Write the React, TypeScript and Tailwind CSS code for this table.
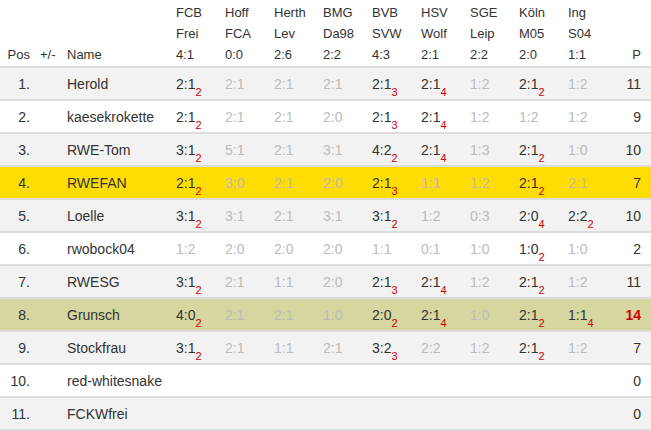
import React from "react";

type Cell = [string, number | null];

const cols: [string, string, string][] = [
  ["FCB", "Frei", "4:1"],
  ["Hoff", "FCA", "0:0"],
  ["Herth", "Lev", "2:6"],
  ["BMG", "Da98", "2:2"],
  ["BVB", "SVW", "4:3"],
  ["HSV", "Wolf", "2:1"],
  ["SGE", "Leip", "2:2"],
  ["Köln", "M05", "2:0"],
  ["Ing", "S04", "1:1"],
];

const c = (s: string, n: number | null = null): Cell => [s, n];

type Row = { pos: string; name: string; cells: Cell[]; p: number; bg: string; hi?: boolean };

const rows: Row[] = [
  { pos: "1.", name: "Herold", p: 11, bg: "bg-[#f2f2f2]", cells: [c("2:1", 2), c("2:1"), c("2:1"), c("2:1"), c("2:1", 3), c("2:1", 4), c("1:2"), c("2:1", 2), c("1:2")] },
  { pos: "2.", name: "kaesekrokette", p: 9, bg: "bg-white", cells: [c("2:1", 2), c("2:1"), c("2:1"), c("2:0"), c("2:1", 3), c("2:1", 4), c("1:2"), c("1:2"), c("1:2")] },
  { pos: "3.", name: "RWE-Tom", p: 10, bg: "bg-[#f2f2f2]", cells: [c("3:1", 2), c("5:1"), c("2:1"), c("3:1"), c("4:2", 2), c("2:1", 4), c("1:3"), c("2:1", 2), c("1:0")] },
  { pos: "4.", name: "RWEFAN", p: 7, bg: "bg-[#ffdd00]", cells: [c("2:1", 2), c("3:0"), c("2:1"), c("2:0"), c("2:1", 3), c("1:1"), c("1:2"), c("2:1", 2), c("2:1")] },
  { pos: "5.", name: "Loelle", p: 10, bg: "bg-[#f2f2f2]", cells: [c("3:1", 2), c("3:1"), c("2:1"), c("3:1"), c("3:1", 2), c("1:2"), c("0:3"), c("2:0", 4), c("2:2", 2)] },
  { pos: "6.", name: "rwobock04", p: 2, bg: "bg-white", cells: [c("1:2"), c("2:0"), c("2:0"), c("2:0"), c("1:1"), c("0:1"), c("1:0"), c("1:0", 2), c("1:0")] },
  { pos: "7.", name: "RWESG", p: 11, bg: "bg-[#f2f2f2]", cells: [c("3:1", 2), c("2:1"), c("1:1"), c("2:0"), c("2:1", 3), c("2:1", 4), c("1:2"), c("2:1", 2), c("1:2")] },
  { pos: "8.", name: "Grunsch", p: 14, hi: true, bg: "bg-[#d6d6a0]", cells: [c("4:0", 2), c("2:1"), c("2:1"), c("1:0"), c("2:0", 2), c("2:1", 4), c("1:0"), c("2:1", 2), c("1:1", 4)] },
  { pos: "9.", name: "Stockfrau", p: 7, bg: "bg-[#f2f2f2]", cells: [c("3:1", 2), c("2:1"), c("1:1"), c("2:1"), c("3:2", 3), c("2:2"), c("1:2"), c("2:1", 2), c("1:2")] },
  { pos: "10.", name: "red-whitesnake", p: 0, bg: "bg-white", cells: [] },
  { pos: "11.", name: "FCKWfrei", p: 0, bg: "bg-[#f2f2f2]", cells: [] },
];

export default function App() {
  return (
    <div className="w-[651px] h-[431px] bg-white overflow-hidden text-[#333]" style={{ fontFamily: '"Liberation Sans", Arial, sans-serif' }}>
      <table className="table-fixed border-separate border-spacing-0 w-[651px]">
        <colgroup>
          <col className="w-[36px]" />
          <col className="w-[26px]" />
          <col className="w-[109px]" />
          {cols.map((_, i) => (
            <col key={i} className="w-[49px]" />
          ))}
          <col className="w-[39px]" />
        </colgroup>
        <thead>
          <tr className="h-[66px] text-[13px] leading-[21.33px]">
            <th className="h-[66px] p-0 align-bottom text-right pr-[6px] pb-[0.5px] font-normal">Pos</th>
            <th className="h-[66px] p-0 align-bottom text-left pl-[4px] pb-[0.5px] font-normal">+/-</th>
            <th className="h-[66px] p-0 align-bottom text-left pl-[5px] pb-[0.5px] font-normal">Name</th>
            {cols.map((h, i) => (
              <th key={i} className="h-[66px] p-0 align-bottom text-left pl-[5px] pb-[0.5px] font-normal">
                <div>{h[0]}</div>
                <div>{h[1]}</div>
                <div>{h[2]}</div>
              </th>
            ))}
            <th className="h-[66px] p-0 align-bottom text-right pr-[10px] pb-[0.5px] font-normal">P</th>
          </tr>
        </thead>
        <tbody>
          {rows.map((r, ri) => {
            const last = ri === rows.length - 1;
            const b = `pt-[2px] border-t-2 border-[#dddddd] ${last ? "border-b-2 h-[35px]" : "h-[33px]"} ${r.bg}`;
            return (
              <tr key={ri} className="text-[14px]">
                <td className={`align-middle text-right pr-[6px] ${b}`}>{r.pos}</td>
                <td className={`align-middle pl-[4px] ${b}`}></td>
                <td className={`align-middle pl-[5px] whitespace-nowrap ${b}`}>{r.name}</td>
                {cols.map((_, ci) => {
                  const cell = r.cells[ci];
                  return (
                    <td key={ci} className={`align-middle pl-[5px] whitespace-nowrap ${b}`}>
                      {cell ? (
                        cell[1] !== null ? (
                          <span className="text-[#333]">
                            {cell[0]}
                            <span className="text-[11px] leading-[0] align-[-7px] text-[#cc0000]">{cell[1]}</span>
                          </span>
                        ) : (
                          <span className="text-[#bbbbbb]">{cell[0]}</span>
                        )
                      ) : null}
                    </td>
                  );
                })}
                <td className={`align-middle text-right pr-[10px] ${b} ${r.hi ? "text-[#cc0000] font-bold" : ""}`}>{r.p}</td>
              </tr>
            );
          })}
        </tbody>
      </table>
    </div>
  );
}
